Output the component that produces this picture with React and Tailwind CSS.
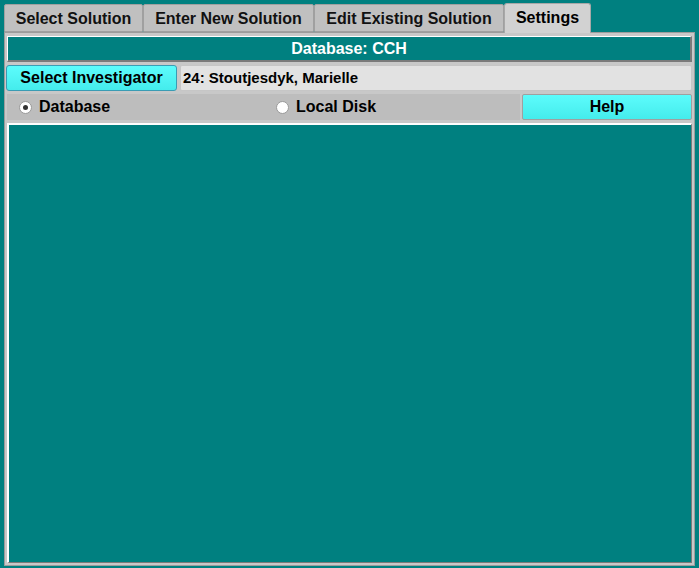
import React, { useState } from 'react';

const font = { fontFamily: '"Liberation Sans", Arial, sans-serif' };

const tabs = [
  { label: 'Select Solution', w: 'w-[139px]' },
  { label: 'Enter New Solution', w: 'w-[171px]' },
  { label: 'Edit Existing Solution', w: 'w-[190px]' },
  { label: 'Settings', w: 'w-[87px]' },
];

function Radio({ checked, label, onClick }) {
  return (
    <button onClick={onClick} className="flex items-center gap-[7px] text-[16px] font-bold text-black">
      <span className="flex h-[13px] w-[13px] items-center justify-center rounded-full border border-[#9a9a9a] bg-white">
        {checked && <span className="h-[5px] w-[5px] rounded-full bg-[#333]" />}
      </span>
      {label}
    </button>
  );
}

export default function App() {
  const [active, setActive] = useState(3);
  const [source, setSource] = useState('db');

  return (
    <div style={font} className="flex h-[568px] w-[699px] flex-col bg-[#008080] px-[4px] pt-[3px] pb-[2px]">
      {/* tab strip */}
      <div className="flex h-[29px] items-end">
        {tabs.map((t, i) =>
          i === active ? (
            <button
              key={t.label}
              onClick={() => setActive(i)}
              className={`${t.w} relative -mb-[1px] h-[30px] rounded-t-[3px] border border-b-0 border-[#a8a8a8] bg-[#d2d2d2] pb-[2px] text-[16px] font-bold text-black`}
            >
              {t.label}
            </button>
          ) : (
            <button
              key={t.label}
              onClick={() => setActive(i)}
              className={`${t.w} h-[28px] rounded-t-[2px] border border-[#a0a0a0] bg-[#c0c0c0] pt-[2px] text-[16px] font-bold text-[#111]`}
            >
              {t.label}
            </button>
          )
        )}
      </div>

      {/* panel */}
      <div className="flex flex-1 flex-col gap-[3px] border border-[#9c9c9c] bg-[#c8c8c8] px-[2px] pt-[3px] pb-[2px]">
        <div className="flex h-[26px] items-center justify-center border-t border-l border-t-white border-l-white border-r-2 border-b-2 border-r-[#7a7a7a] border-b-[#7a7a7a] bg-[#008080] text-[16px] font-bold text-white">
          Database: CCH
        </div>

        <div className="flex h-[26px] gap-[3px]">
          <button className="-ml-[1px] w-[171px] rounded-[3px] border border-[#3a9cb4] bg-gradient-to-b from-[#5cfcfc] to-[#44ecec] text-[16px] font-bold text-black">
            Select Investigator
          </button>
          <div className="flex flex-1 items-center rounded-[2px] border border-[#c6c6c6] bg-[#e2e2e2] pl-[2px] text-[15px] font-bold text-black">
            24: Stoutjesdyk, Marielle
          </div>
        </div>

        <div className="flex h-[26px] gap-[2px]">
          <div className="flex w-[513px] items-center bg-[#bdbdbd] pl-[12px]">
            <div className="w-[257px]">
              <Radio checked={source === 'db'} label="Database" onClick={() => setSource('db')} />
            </div>
            <Radio checked={source === 'disk'} label="Local Disk" onClick={() => setSource('disk')} />
          </div>
          <button className="flex-1 rounded-[2px] border border-[#a0a0a0] bg-gradient-to-b from-[#5cfcfc] to-[#44ecec] text-[16px] font-bold text-black">
            Help
          </button>
        </div>

        <div className="flex-1 border-t-2 border-l-2 border-t-white border-l-white border-r border-b border-r-[#7a7a7a] border-b-[#7a7a7a] bg-[#008080]" />
      </div>
    </div>
  );
}
